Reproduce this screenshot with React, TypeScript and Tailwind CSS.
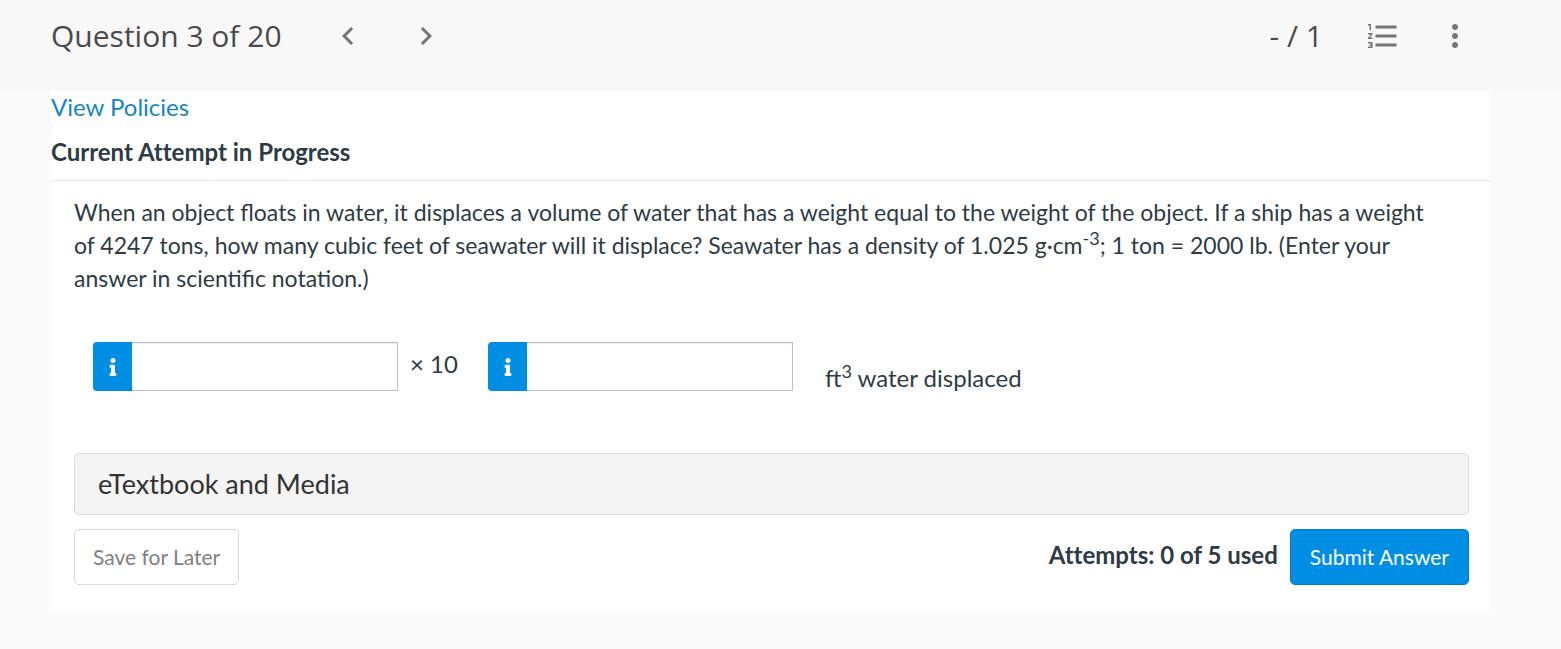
import React from 'react';
import { MdChevronLeft, MdChevronRight, MdFormatListNumbered, MdMoreVert } from 'react-icons/md';
import { FaInfo } from 'react-icons/fa';

const AnswerInput = ({ id, label }: { id: string; label: string }) => (
    <div className="flex h-[49px] w-[305px]">
        <button
            type="button"
            aria-label={`${label} info`}
            className="flex w-[39px] items-center justify-center rounded-l bg-[#008ee5] text-white"
        >
            <FaInfo size={18} />
        </button>
        <input
            id={id}
            type="text"
            aria-label={label}
            className="min-w-0 flex-1 border border-l-0 border-[#bfbfbf] bg-white px-3 shadow-[inset_0_1px_1px_rgba(0,0,0,0.08)] outline-none"
        />
    </div>
);

const Header = () => (
    <header className="flex h-[90px] items-start bg-[#f8f8f8] pr-[88px] pl-[51px] font-['Open_Sans',sans-serif] text-[#4a4a4a]">
        <div className="flex h-[72px] flex-1 items-center">
            <h1 className="text-[30px] leading-10">Question 3 of 20</h1>
            <button type="button" aria-label="Previous question" className="ml-12 text-[#757575]">
                <MdChevronLeft size={36} />
            </button>
            <button type="button" aria-label="Next question" className="ml-[42px] text-[#757575]">
                <MdChevronRight size={36} />
            </button>
            <span className="ml-auto text-[30px] leading-10">- / 1</span>
            <button type="button" aria-label="Question list" className="ml-[42px] text-[#757575]">
                <MdFormatListNumbered size={36} />
            </button>
            <button type="button" aria-label="More options" className="ml-9 text-[#757575]">
                <MdMoreVert size={36} />
            </button>
        </div>
    </header>
);

const App = () => {
    return (
        <div className="min-h-screen bg-[#fafafa] font-['Lato',sans-serif] text-[24px] text-[#2d3b45]">
            <Header />
            <main className="mr-[70px] ml-[51px] bg-white pb-[26px]">
                <a href="#policies" className="block leading-[34px] text-[#1484cc]">
                    View Policies
                </a>
                <h2 className="border-b border-[#e8e8e8] pt-2.5 pb-2.5 leading-9 font-bold [font-variant-ligatures:none]">
                    Current Attempt in Progress
                </h2>

                <div className="pt-[15px] pr-[22px] pl-[23px]">
                    <p className="pr-8 text-[23px] leading-[33px]">
                        When an object floats in water, it displaces a volume of water that has a weight equal to the
                        weight of the object. If a ship has a weight of 4247 tons, how many cubic feet of seawater will
                        it displace? Seawater has a density of 1.025 g·cm
                        <sup className="text-[18px]">-3</sup>; 1 ton = 2000 lb. (Enter your answer in scientific
                        notation.)
                    </p>

                    <div className="mt-[47px] flex items-start pl-[19px]">
                        <AnswerInput id="coefficient" label="Coefficient" />
                        <span className="mx-3 w-[66px] pt-1 leading-9">× 10</span>
                        <AnswerInput id="exponent" label="Exponent" />
                        <span className="ml-8 pt-5 leading-8">
                            ft<sup className="text-[18px]">3</sup> water displaced
                        </span>
                    </div>

                    <button
                        type="button"
                        className="mt-[59px] block h-[62px] w-full rounded-[5px] border border-[#dddddd] bg-[#f4f4f4] px-[23px] text-left text-[27px] text-[#333333]"
                    >
                        eTextbook and Media
                    </button>

                    <div className="mt-3.5 flex items-start justify-between">
                        <button
                            type="button"
                            className="h-14 rounded-[5px] border border-[#d8d8d8] bg-white px-[18px] text-[21px] text-[#808080]"
                        >
                            Save for Later
                        </button>
                        <div className="flex items-start gap-3">
                            <span className="pt-2 leading-9 font-bold [font-variant-ligatures:none]">
                                Attempts: 0 of 5 used
                            </span>
                            <button
                                type="button"
                                className="h-14 rounded-[5px] border border-[#007dca] bg-[#008ee5] px-[19px] text-[21px] text-white"
                            >
                                Submit Answer
                            </button>
                        </div>
                    </div>
                </div>
            </main>
        </div>
    );
};

export default App;
